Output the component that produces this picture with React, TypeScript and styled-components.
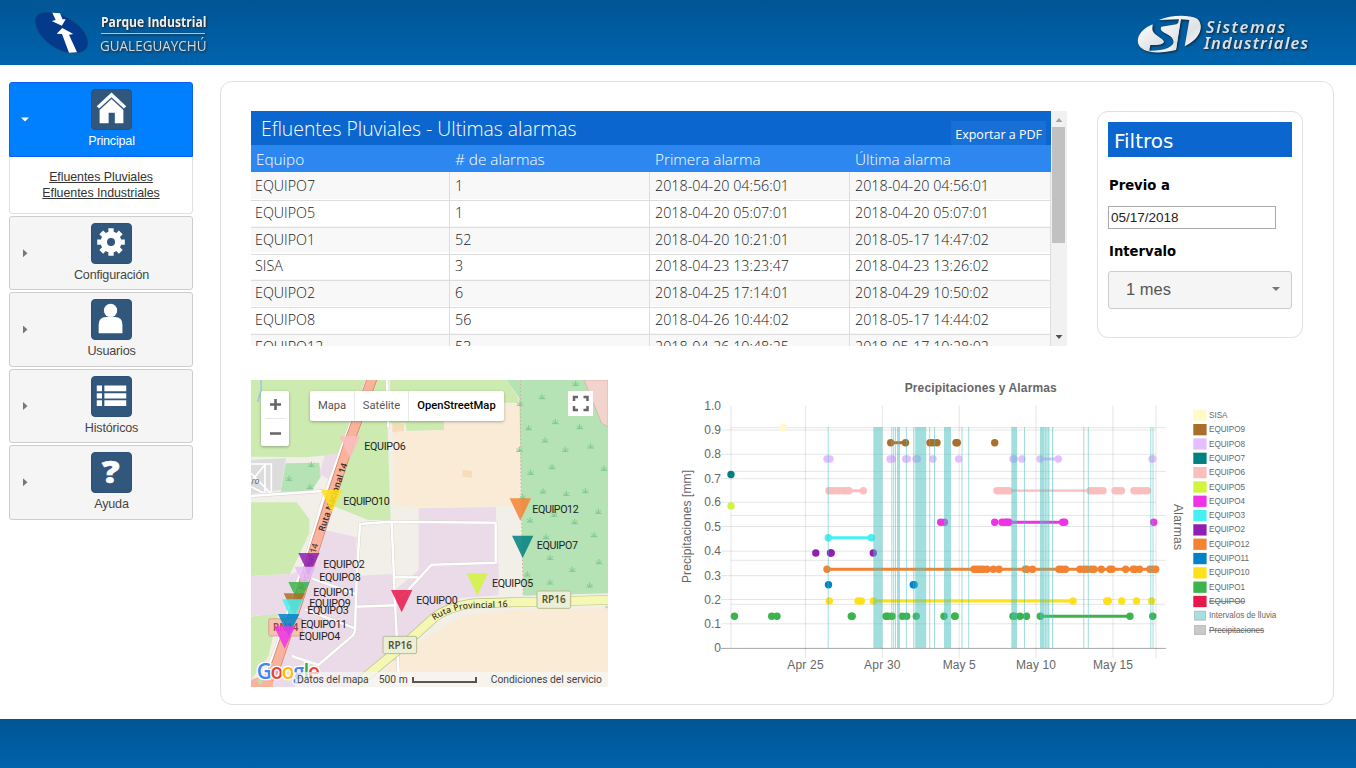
import React from 'react';
import styled, { createGlobalStyle } from 'styled-components';

const Global = createGlobalStyle`
  * { box-sizing: border-box; }
  body { margin: 0; background: #fff; font-family: "Liberation Sans", Arial, sans-serif; }
`;

const sans = '"Liberation Sans", Arial, sans-serif';
const open = '"Open Sans", "Noto Sans", sans-serif';

const Page = styled.div`
  display: flex;
  flex-direction: column;
  width: 1356px;
  height: 768px;
  overflow: hidden;
`;
const Header = styled.header`
  display: flex;
  justify-content: space-between;
  flex: 0 0 65px;
  background: linear-gradient(#005595, #0064ad);
`;
const Footer = styled.footer`
  flex: 0 0 49px;
  background: linear-gradient(#005595, #0063ab);
`;
const Body = styled.div`
  display: flex;
  flex: 1;
  align-items: flex-start;
  padding: 16px 22px 14px 9px;
`;
const Sidebar = styled.nav`
  display: flex;
  flex-direction: column;
  gap: 2px;
  width: 184px;
  margin: 1px 27px 0 0;
`;
const MenuItem = styled.div<{ $active?: boolean }>`
  display: flex;
  align-items: center;
  height: ${p => (p.$active ? 75 : 74.4)}px;
  padding: 0 0 0 11px;
  border: 1px solid ${p => (p.$active ? '#0a5ff0' : '#cdcdcd')};
  border-radius: ${p => (p.$active ? '3px 3px 0 0' : '3px')};
  background: ${p => (p.$active ? '#007fff' : '#f5f5f5')};
  color: ${p => (p.$active ? '#fff' : '#454545')};
  font-size: 12.6px;
  letter-spacing: -0.2px;
`;
const Caret = styled.span<{ $open?: boolean }>`
  width: 8px;
  height: 8px;
  margin-left: ${p => (p.$open ? 0 : 2)}px;
  margin-right: ${p => (p.$open ? 0 : -2)}px;
  background: ${p => (p.$open ? '#fff' : '#777')};
  clip-path: ${p => (p.$open ? 'polygon(0 25%, 100% 25%, 50% 75%)' : 'polygon(0 0, 56% 50%, 0 100%)')};
`;
const MenuLabel = styled.div`
  display: flex;
  flex-direction: column;
  align-items: center;
  gap: 3px;
  flex: 1;
  line-height: 16px;
  padding: 0 0 0 2px;
  margin-top: -0.6px;
`;
const Tile = styled.svg`
  width: 41px;
  height: 41px;
  border-radius: 4px;
  background: #31577d;
  border: 1px solid #2c5078;
`;
const SubMenu = styled.div`
  display: flex;
  flex-direction: column;
  align-items: center;
  height: 57px;
  margin-top: -2px;
  padding-top: 12px;
  border: 1px solid #e0e0e0;
  border-top: 0;
  border-radius: 0 0 4px 4px;
  color: #333;
  font-size: 12.4px;
  letter-spacing: -0.05px;
  line-height: 16px;
  text-decoration: underline;
`;
const Panel = styled.main`
  display: flex;
  flex-direction: column;
  gap: 35px;
  width: 1114px;
  height: 624px;
  padding: 29px 30px 0 30px;
  border: 1px solid #e0e0e0;
  border-radius: 12px;
`;
const TopRow = styled.section`
  display: flex;
  justify-content: space-between;
  align-items: flex-start;
  height: 234px;
`;
const BottomRow = styled.section`
  display: flex;
  align-items: flex-start;
  gap: 62px;
`;
const TableBox = styled.div`
  display: flex;
  width: 816px;
  height: 235px;
  overflow: hidden;
  font-family: ${open};
  font-weight: 300;
`;
const TableMain = styled.div`
  width: 800px;
`;
const TableTitle = styled.div`
  display: flex;
  justify-content: space-between;
  align-items: flex-end;
  height: 34px;
  padding: 0 5px 0 10px;
  background: #0b66d0;
  color: #fff;
  font-size: 19.35px;
  line-height: 32px;
`;
const ExportButton = styled.span`
  height: 24px;
  padding: 0 4px;
  background: #1870d6;
  font-size: 12.5px;
  font-weight: 400;
  line-height: 27px;
`;
const Columns = styled.div<{ $alt?: boolean }>`
  display: grid;
  grid-template-columns: 199px 200px 200px 201px;
  height: 26.75px;
  background: ${p => (p.$alt ? '#f8f8f8' : '#fff')};
  color: #222;
  font-size: 14.3px;
  line-height: 28px;
`;
const HeadColumns = styled(Columns)`
  height: 27px;
  background: #2c87f0;
  color: #fff;
  font-size: 15.3px;
`;
const HeadCell = styled.span`
  padding-left: 5px;
`;
const Cell = styled.span`
  padding-left: 5px;
  border-right: 1px solid #ddd;
  border-bottom: 1px solid #ddd;
  &:first-child { padding-left: 4px; }
`;
const ScrollBar = styled.div`
  display: flex;
  flex-direction: column;
  justify-content: space-between;
  align-items: center;
  width: 16px;
  background: #f1f1f1;
`;
const ScrollThumb = styled.div`
  width: 13px;
  height: 116px;
  margin: 0 1px auto 0;
  background: #c1c1c1;
`;
const ScrollArrow = styled.span<{ $down?: boolean }>`
  width: 7px;
  height: 4px;
  margin: ${p => (p.$down ? '0 0 7px' : '7px 0 5px')};
  background: ${p => (p.$down ? '#505050' : '#a3a3a3')};
  clip-path: ${p => (p.$down ? 'polygon(0 0, 100% 0, 50% 100%)' : 'polygon(0 100%, 100% 100%, 50% 0)')};
`;
const Filters = styled.aside`
  display: flex;
  flex-direction: column;
  width: 206px;
  height: 227px;
  padding: 10px;
  border: 1px solid #e0e0e0;
  border-radius: 11px;
  font-family: "DejaVu Sans", Verdana, sans-serif;
`;
const FilterTitle = styled.div`
  height: 35px;
  padding-left: 6px;
  background: #0b66d0;
  color: #fff;
  font-size: 20px;
  line-height: 38px;
`;
const FilterLabel = styled.label`
  margin-top: 20px;
  font-size: 13.2px;
  font-weight: bold;
  line-height: 17px;
  padding-left: 1px;
`;
const DateBox = styled.div`
  width: 168px;
  height: 23px;
  margin-top: 12px;
  margin-bottom: -6px;
  padding-left: 2px;
  border: 1px solid #a9a9a9;
  color: #222;
  font: 13.5px/21px ${sans};
`;
const SelectBox = styled.div`
  display: flex;
  justify-content: space-between;
  align-items: center;
  height: 38px;
  margin-top: 11px;
  padding: 0 11px 2px 17px;
  border: 1px solid #ccc;
  border-radius: 3px;
  background: #f5f5f5;
  color: #555;
  font: 16.5px ${sans};
  & > span { background: #777; }
`;
const MapBox = styled.div`
  position: relative;
  flex: none;
  width: 357px;
  height: 307px;
  overflow: hidden;
  font-family: Roboto, sans-serif;
`;
const MapSvg = styled.svg`
  display: block;
  width: 357px;
  height: 307px;
`;
const MapTypes = styled.div`
  position: absolute;
  left: 59px;
  top: 11px;
  display: flex;
  height: 30px;
  border-radius: 2px;
  background: #fff;
  box-shadow: 0 1px 3px rgba(0, 0, 0, 0.3);
`;
const MapType = styled.span<{ $w: number; $on?: boolean }>`
  width: ${p => p.$w}px;
  border-left: ${p => (p.$w === 44 ? 0 : 1)}px solid #e8e8e8;
  color: ${p => (p.$on ? '#000' : '#565656')};
  font-size: 11.2px;
  font-weight: ${p => (p.$on ? 500 : 400)};
  line-height: 30px;
  text-align: center;
`;
const ZoomBox = styled.div`
  position: absolute;
  left: 10px;
  top: 11px;
  width: 28px;
  height: 55px;
  border-radius: 2px;
  background: #fff;
  box-shadow: 0 1px 3px rgba(0, 0, 0, 0.3);
`;
const FullScreen = styled.div`
  position: absolute;
  left: 317px;
  top: 11px;
  width: 25px;
  height: 25px;
  background: #fff;
`;
const Credits = styled.div`
  position: absolute;
  right: 0;
  bottom: 0;
  display: flex;
  align-items: center;
  height: 15px;
  width: 313px;
  padding: 0 6px 0 2px;
  background: rgba(245, 245, 245, 0.72);
  color: #444;
  font-size: 10.3px;
  white-space: nowrap;
`;
const ScaleText = styled.span`
  margin-left: auto;
`;
const Scale = styled.span`
  flex: none;
  width: 65px;
  height: 6px;
  margin: 0 14px 0 4px;
  border: 2px solid #555;
  border-top: 0;
`;
const ChartSvg = styled.svg`
  flex: none;
  width: 640px;
  height: 310px;
  margin-top: -5px;
  overflow: visible;
  font-family: ${sans};
`;
const BrandSvg = styled.svg<{ $w: number }>`
  width: ${p => p.$w}px;
  height: 65px;
`;

const ParkLogo = () => (
  <BrandSvg $w={240} viewBox="0 0 240 65">
    <path d="M35.5 21C35.5 14.500 40 12.500 48 12.500C63 12.500 87.500 27 87.700 43C87.700 50 82 53 73 53C55 52 36 36 35.500 21Z" fill="#033a8c" stroke="#1b4166" strokeWidth=".6" />
    <path d="M52.300 12.700L60 13.300L62.500 19.300H65.700L61.800 25.700L51.700 21L55.700 20Z" fill="#fff" />
    <path d="M62.300 28L73.300 34L69 34.700L77 52.300L69 52.700L62 34L56.700 33.700Z" fill="#fff" />
    <g fontFamily={open} style={{ filter: 'drop-shadow(1px 1px 1px #222)' }}>
      <text x="101" y="27" fontSize="13.500" fontWeight="700" textLength="105.500" lengthAdjust="spacingAndGlyphs" fill="#f0f0f0">Parque Industrial</text>
      <path d="M101 33.500H205" stroke="#b9c4d0" />
      <text x="100" y="51" fontSize="14.800" fontWeight="500" textLength="106.500" lengthAdjust="spacingAndGlyphs" fill="#d4d8dc">GUALEGUAYCHÚ</text>
    </g>
  </BrandSvg>
);

const SistemasLogo = () => (
  <BrandSvg $w={256} viewBox="0 0 256 65">
    <defs>
      <linearGradient id="silver" x1="0" y1="0" x2="1" y2="1">
        <stop offset="0" stopColor="#fff" />
        <stop offset=".6" stopColor="#dfe2e5" />
        <stop offset="1" stopColor="#fff" />
      </linearGradient>
    </defs>
    <g style={{ filter: 'drop-shadow(1px 1px 1px #123)' }}>
      <g transform="scale(.3333)" fill="url(#silver)">
        <path d="M158 73C130 84 110 106 114 128C120 156 168 166 228 149L240 70L232 70L226 84L183 86C184 100 219 104 222 122C222 140 196 152 148 152L151 135C170 136 190 134 192 125C190 114 158 106 157 88Z" />
        <path d="M176 60C210 46 262 42 292 56C314 76 302 118 254 139L268 60L243 58L228 150L208 152C226 140 226 116 206 104C190 96 178 92 184 80L234 72L237 58Z" />
      </g>
      <g fontFamily='"Noto Sans", sans-serif' fontStyle="italic" fontWeight="600" fill="#dde0e3">
        <text x="106" y="32.500" fontSize="16.500" textLength="79">Sistemas</text>
        <text x="104" y="49" fontSize="16.500" textLength="104">Industriales</text>
      </g>
    </g>
  </BrandSvg>
);

const HomeIcon = () => (
  <Tile viewBox="0 0 41 41">
    <path d="M20.500 2.500L36 17L33.500 19.500L20.500 7.500L7.500 19.500L5 17Z" fill="#fff" />
    <path d="M20.500 9.500L33 21V35H24V24H17.500V35H8V21Z" fill="#fff" />
  </Tile>
);
const GearIcon = () => (
  <Tile viewBox="0 0 41 41">
    <g fill="#fff">
      <circle cx="20" cy="19" r="11" />
      {[0, 45, 90, 135, 180, 225, 270, 315].map(a => (
        <path key={a} d="M17.200 4.500H22.800V11H17.200Z" transform={`rotate(${a} 20 19)`} />
      ))}
    </g>
    <circle cx="20" cy="19" r="4.200" fill="#31577d" />
  </Tile>
);
const UserIcon = () => (
  <Tile viewBox="0 0 41 41">
    <circle cx="19.500" cy="11" r="7" fill="#fff" />
    <path d="M7 35V26Q7 18 15 18H24Q32 18 32 26V35Z" fill="#fff" />
  </Tile>
);
const ListIcon = () => (
  <Tile viewBox="0 0 41 41">
    <path d="M5 9H10.500V15H5ZM13 9H36V15H13ZM5 17H10.500V22.500H5ZM13 17H36V22.500H13ZM5 24.500H10.500V30.500H5ZM13 24.500H36V30.500H13Z" fill="#fff" />
  </Tile>
);
const HelpIcon = () => (
  <Tile viewBox="0 0 41 41">
    <text x="16.700" y="32" transform="scale(1.18 1)" fontFamily={open} fontSize="31" fontWeight="800" textAnchor="middle" fill="#fff" stroke="#fff" strokeWidth=".6">?</text>
  </Tile>
);

const menu = [
  { label: 'Configuración', Icon: GearIcon },
  { label: 'Usuarios', Icon: UserIcon },
  { label: 'Históricos', Icon: ListIcon },
  { label: 'Ayuda', Icon: HelpIcon },
];

const alarms = [
  ['EQUIPO7', '1', '2018-04-20 04:56:01', '2018-04-20 04:56:01'],
  ['EQUIPO5', '1', '2018-04-20 05:07:01', '2018-04-20 05:07:01'],
  ['EQUIPO1', '52', '2018-04-20 10:21:01', '2018-05-17 14:47:02'],
  ['SISA', '3', '2018-04-23 13:23:47', '2018-04-23 13:26:02'],
  ['EQUIPO2', '6', '2018-04-25 17:14:01', '2018-04-29 10:50:02'],
  ['EQUIPO8', '56', '2018-04-26 10:44:02', '2018-05-17 14:44:02'],
  ['EQUIPO12', '53', '2018-04-26 10:48:25', '2018-05-17 10:28:02'],
];

/* Map markers: name, colour, left and top of the triangle, label x and baseline (map units, 3 per pixel) */
type Marker = [string, string, number, number, number, number];
const markers: Marker[] = [
  ['EQUIPO6', '#fabebe', 298, 198, 374, 241],
  ['EQUIPO10', '#ffe119', 243, 360, 311, 404],
  ['EQUIPO12', '#f58231', 809, 385, 878, 429],
  ['EQUIPO7', '#008080', 816, 497, 891, 537],
  ['EQUIPO2', '#911eb4', 175, 549, 251, 593],
  ['EQUIPO8', '#e6beff', 164, 590, 239, 633],
  ['EQUIPO1', '#3cb44b', 145, 636, 221, 678],
  ['EQUIPO9', '#aa6e28', 131, 670, 209, 711],
  ['EQUIPO3', '#46f0f0', 126, 688, 203, 731],
  ['EQUIPO11', '#0082c8', 114, 732, 183, 774],
  ['EQUIPO4', '#f032e6', 102, 769, 178, 810],
  ['EQUIPO0', '#e6194b', 453, 660, 530, 701],
  ['EQUIPO5', '#d2f53c', 680, 610, 757, 651],
];
const shrubs = [
  [1007, 40], [906, 80], [840, 100], [946, 155], [866, 173], [1019, 170], [915, 210], [976, 238], [1052, 228],
  [838, 238], [936, 290], [872, 307], [1092, 295], [909, 363], [979, 370], [1036, 362], [848, 380], [1075, 424],
  [942, 433], [870, 450], [1004, 455], [918, 500], [1062, 494], [930, 562], [1077, 575], [997, 598], [862, 612],
  [930, 636], [1049, 645], [147, 325], [210, 350], [214, 283],
];
const minorRoads = [
  'M455 455L465 700L478 952', 'M383 24L304 235L250 385L208 530L170 640L110 830L60 952',
  'M350 620L345 780Q344 790 338 797L235 885L155 858', 'M350 620L360 462L450 455L767 458V578L575 584L500 665L480 680',
  'M465 622H535', 'M345 710L470 706', 'M215 625L345 672', 'M195 718L345 775', 'M441 30L445 172', 'M33 378L250 363',
];

const MapView = () => (
  <MapBox>
    <MapSvg viewBox="33 30 1071 921">
      <rect x="33" y="30" width="1071" height="921" fill="#f2efe9" />
      <g fill="#cdebb0">
        <path d="M33 30H375L300 252L200 262L33 260Z" />
        <path d="M405 30H438L452 450L385 450L272 405L330 250Z" />
        <path d="M450 30H800L835 85L835 98H640L612 120V180L500 183L497 160L450 158Z" />
        <path d="M33 397L170 397L208 447L208 490L150 612L33 618Z" />
        <path d="M33 740L115 730L85 860L33 930Z" />
      </g>
      <g fill="#b5e3b5">
        <path d="M800 30L838 85L840 200L850 677L1104 670V30Z" />
        <path d="M137 280L238 278L242 320L215 363L122 365Z" />
        <path d="M1095 708H1104V750Z" />
      </g>
      <path d="M1032 30H1104V170L1085 160Z" fill="#f3d3ce" stroke="#dba7a0" strokeWidth="2" />
      <g fill="#ebdbe8">
        <path d="M255 255L300 250L285 325L265 327L238 310Z" />
        <path d="M255 480L350 502L345 618L455 612L480 875L420 870L340 952H90L130 840L160 730L33 738V618L155 612L180 600Z" />
        <path d="M536 415L768 411V458H770V580H776V676L660 684L505 800L470 830L465 660L536 600Z" />
      </g>
      <g fill="#faebd7">
        <path d="M457 187L612 180V140L640 99L837 99L840 408L540 412L462 407Z" />
        <path d="M1104 715L850 717L670 735L560 800L470 870L380 951H1104Z" />
      </g>
      <path d="M667 300L696 302V323L667 320ZM457 158L493 162L491 184L457 186Z" fill="#f5dcba" />
      <path d="M33 270L138 265L122 360L33 372Z" fill="#dcdcdc" />
      <g fill="none" stroke="#fff" strokeWidth="5">
        <path d="M33 282H94V372M75 284V368M33 335L75 284M33 310L94 372M33 350L72 370" />
      </g>
      <g fill="none" stroke="#d4cfc9" strokeWidth="10" strokeLinejoin="round">
        {minorRoads.map(d => <path key={d} d={d} />)}
      </g>
      <g fill="none" stroke="#fff" strokeWidth="7.500" strokeLinejoin="round">
        {minorRoads.map(d => <path key={d} d={d} />)}
      </g>
      <path d="M63 30L64 60L53 95" fill="none" stroke="#9ccbe8" strokeWidth="5" />
      <path d="M841 30L843 400L850 677" fill="none" stroke="#dba397" strokeWidth="3" strokeDasharray="4 7" />
      <g fill="none" strokeLinejoin="round">
        <path d="M1104 690L850 696L700 700Q620 712 580 745L480 835L340 951" stroke="#bcc07e" strokeWidth="29" />
        <path d="M1104 690L850 696L700 700Q620 712 580 745L480 835L340 951" stroke="#f4f8b4" strokeWidth="25" />
        <path d="M397 24L330 210L232 510L175 690L110 880L65 965" stroke="#cf7a62" strokeWidth="31" />
        <path d="M397 24L330 210L232 510L175 690L110 880L65 965" stroke="#f9b29c" strokeWidth="27" />
      </g>
      <path d="M33 930L95 905L100 951H33Z" fill="#f9b29c" />
      <path d="M55 925L70 932L65 945L52 940Z" fill="#bfe0a0" />
      <g fill="none" stroke="#7fc894" strokeWidth="3">
        {shrubs.map(([x, y]) => (
          <path key={`${x}-${y}`} d={`M${x - 10} ${y + 6}H${x + 10}M${x} ${y + 6}V${y - 8}M${x} ${y + 6}L${x - 8} ${y - 3}M${x} ${y + 6}L${x + 8} ${y - 3}`} />
        ))}
      </g>
      <g fontFamily='"Noto Sans", sans-serif' fontSize="26" fontWeight="600" fill="#3c2c28">
        <text transform="translate(252 486) rotate(-71)" textLength="215">Ruta Nacional 14</text>
        <text transform="translate(193 662) rotate(-73)" textLength="145" opacity=".8">Nacional 14</text>
        <path id="rp" d="M583 752Q640 712 720 714L820 710" fill="none" />
        <text fontWeight="500"><textPath href="#rp" textLength="228">Ruta Provincial 16</textPath></text>
      </g>
      <text x="34" y="341" fontFamily='"Noto Sans", sans-serif' fontStyle="italic" fontSize="26" fill="#666">ro</text>
      <g fontFamily='"Noto Sans", sans-serif' fontSize="30" fontWeight="600" textAnchor="middle">
        <rect x="86" y="746" width="101" height="52" rx="5" fill="#f3c3b2" stroke="#d8907c" strokeWidth="2" />
        <text x="137" y="783" textLength="76" lengthAdjust="spacingAndGlyphs" fill="#9a4638">RN14</text>
        <rect x="429" y="799" width="101" height="52" rx="5" fill="#ecefd8" stroke="#b7bb8e" strokeWidth="3" />
        <text x="480" y="836" textLength="72" lengthAdjust="spacingAndGlyphs" fill="#54552f">RP16</text>
        <rect x="891" y="663" width="101" height="52" rx="5" fill="#ecefd8" stroke="#b7bb8e" strokeWidth="3" />
        <text x="941" y="700" textLength="72" lengthAdjust="spacingAndGlyphs" fill="#54552f">RP16</text>
      </g>
      {markers.map(([name, color, x, y]) => (
        <path key={name} d={`M${x} ${y}h64l-32 67z`} fill={color} opacity=".85" />
      ))}
      <g fontFamily="Roboto, sans-serif" fontSize="32" fill="#222">
        {markers.map(([name, , , , x, y]) => (
          <text key={name} x={x - 1} y={y} textLength={name.length === 8 ? 139 : 124}>{name}</text>
        ))}
      </g>
      <g fontFamily='"Open Sans", sans-serif' fontSize="62" fontWeight="600" stroke="#fff" strokeWidth="8" paintOrder="stroke">
        <text x="50" y="926" textLength="190">
          <tspan fill="#4285f4">G</tspan><tspan fill="#ea4335">o</tspan><tspan fill="#fbbc05">o</tspan><tspan fill="#4285f4">g</tspan><tspan fill="#34a853">l</tspan><tspan fill="#ea4335">e</tspan>
        </text>
      </g>
    </MapSvg>
    <ZoomBox>
      <svg width="28" height="55" viewBox="0 0 28 55">
        <path d="M9 13.500H20M14.500 8V19M9 42.500H20" stroke="#666" strokeWidth="2.600" />
        <path d="M4.500 27.500H24" stroke="#e6e6e6" />
      </svg>
    </ZoomBox>
    <MapTypes>
      <MapType $w={44}>Mapa</MapType>
      <MapType $w={54}>Satélite</MapType>
      <MapType $w={96} $on>OpenStreetMap</MapType>
    </MapTypes>
    <FullScreen>
      <svg width="25" height="25" viewBox="0 0 25 25">
        <path d="M6 10V6H10M15.500 6H19.500V10M19.500 15V19H15.500M10 19H6V15" fill="none" stroke="#666" strokeWidth="2.500" />
      </svg>
    </FullScreen>
    <Credits>
      <span>Datos del mapa</span>
      <ScaleText>500 m</ScaleText>
      <Scale />
      <span>Condiciones del servicio</span>
    </Credits>
  </MapBox>
);

/* Alarm series: name, colour, row y, line spans, dot positions */
interface Series { name: string; color: string; y: number; lines: number[][]; dots: number[] }
const series: Series[] = [
  { name: 'SISA', color: '#fffac8', y: 427.5, lines: [], dots: [782.7] },
  { name: 'EQUIPO9', color: '#aa6e28', y: 442.7, lines: [[890.7, 905.7]], dots: [890.7, 905.5, 930, 933, 937, 956, 957.3, 994.7] },
  { name: 'EQUIPO8', color: '#e6beff', y: 459, lines: [[1040, 1058]], dots: [827, 830, 890, 892.3, 905.7, 907.3, 916, 917.3, 933, 958.7, 1013, 1014.5, 1022, 1040, 1058.3, 1152, 1152.8] },
  { name: 'EQUIPO7', color: '#008080', y: 474.5, lines: [], dots: [731] },
  { name: 'EQUIPO6', color: '#fabebe', y: 490.7, lines: [[828, 863], [997, 1104]], dots: [829, 832, 835, 839, 843, 846, 849, 863.3, 997, 1000, 1003, 1006, 1009, 1090, 1093, 1096, 1100, 1103, 1115, 1118, 1121.5, 1134, 1137, 1140, 1144, 1147.5] },
  { name: 'EQUIPO5', color: '#d2f53c', y: 506, lines: [], dots: [731] },
  { name: 'EQUIPO4', color: '#f032e6', y: 522.3, lines: [[1009, 1064]], dots: [940.7, 944.5, 994.7, 1002, 1005, 1007, 1009, 1062.7, 1064.7, 1153.7] },
  { name: 'EQUIPO3', color: '#46f0f0', y: 537.7, lines: [[828, 871]], dots: [828.3, 871.2] },
  { name: 'EQUIPO2', color: '#911eb4', y: 553, lines: [], dots: [815.8, 830.5, 831.2, 873.3] },
  { name: 'EQUIPO12', color: '#f58231', y: 569.3, lines: [[827, 1156]], dots: [827, 974, 977, 980, 983, 987, 993.3, 999, 1025.3, 1027, 1032.5, 1059, 1062, 1065.5, 1080, 1084, 1087, 1091, 1094, 1101.3, 1110, 1112, 1125.7, 1133.3, 1135, 1139.5, 1150, 1153, 1155.7] },
  { name: 'EQUIPO11', color: '#0082c8', y: 584.7, lines: [], dots: [828.5, 913.3, 914.2] },
  { name: 'EQUIPO10', color: '#ffe119', y: 601, lines: [[873, 1073]], dots: [829.3, 858, 861.3, 873.3, 1073, 1106.7, 1108.3, 1121.7, 1136.5, 1151.5] },
  { name: 'EQUIPO1', color: '#3cb44b', y: 616.3, lines: [[1040, 1130]], dots: [734.4, 771.7, 777, 851.3, 852.2, 886, 888, 892, 902.3, 906.7, 916.3, 944, 954.6, 955.3, 1013, 1014.5, 1020, 1026.5, 1040.3, 1130, 1152.7] },
];
/* Rain intervals: left edge and width */
const rain = [
  [827.7, 1], [873.3, 9.2], [891.3, 1], [893.2, 1], [895, 1], [897, 3], [905.9, 1], [913.2, 1], [914.8, 1], [916, 10.2],
  [929.2, 1], [934, 1], [944, 7], [961.5, 1], [968.2, 1], [1011.3, 5.7], [1024, 1], [1040, 4], [1044.3, 1.9], [1046.4, 1],
  [1047.6, 1.8], [1052, 1.2], [1083.3, 1], [1087.8, 1], [1150.3, 1], [1152.5, 1],
];
const ticksY: [number, string][] = [
  [405.5, '1.0'], [430, '0.9'], [454.3, '0.8'], [478.7, '0.7'], [502.3, '0.6'], [526.5, '0.5'],
  [551.2, '0.4'], [575.7, '0.3'], [599.5, '0.2'], [623.8, '0.1'], [648.3, '0'],
];
const ticksX: [number, string][] = [[805.4, 'Apr 25'], [882.3, 'Apr 30'], [959.2, 'May 5'], [1036, 'May 10'], [1113, 'May 15']];
const legend = [
  ...series.map(s => ({ name: s.name, color: s.color, off: false })),
  { name: 'EQUIPO0', color: '#e6194b', off: true },
  { name: 'Intervalos de lluvia', color: '#a5dfdf', off: false },
  { name: 'Precipitaciones', color: '#c9c9c9', off: true },
];

const Chart = () => (
  <ChartSvg viewBox="670 375 640 310">
    <text x="980.700" y="392" fontSize="12" fontWeight="bold" textAnchor="middle" textLength="152" fill="#666">Precipitaciones y Alarmas</text>
    <g stroke="#000" strokeOpacity=".1">
      {ticksY.slice(1, 10).map(([y]) => <path key={y} d={`M721 ${y}H1156`} />)}
      {[427.7, 471.4, 515.4, 560.3, 604.3].map(y => <path key={y} d={`M731 ${y}H1166`} />)}
      {ticksX.map(([x]) => <path key={x} d={`M${x} 405.500V658`} />)}
      <path d="M731 405.500V648M1156 405.500V658" />
      <path d="M721 648.400H1166" strokeOpacity=".35" />
    </g>
    {series.map(s => (
      <g key={s.name} fill={s.color} stroke={s.color}>
        {s.lines.map(([a, b]) => <path key={a} d={`M${a} ${s.y}H${b}`} strokeWidth={s.name === 'EQUIPO6' && a > 900 ? 2.3 : 3} />)}
        {s.dots.map((x, i) => <circle key={i} cx={x} cy={s.y} r="3.700" stroke="none" />)}
      </g>
    ))}
    {rain.map(([x, w]) => <rect key={x} x={x} y="427" width={w} height="221" fill="rgb(75,192,192)" fillOpacity=".52" />)}
    <g fontSize="12" fill="#666">
      {ticksY.map(([y, t]) => <text key={t} x="721" y={y + 4} textAnchor="end">{t}</text>)}
      {ticksX.map(([x, t]) => <text key={t} x={x} y="669" textAnchor="middle" textLength={t.length === 5 ? 33 : t[0] === 'A' ? 36.5 : 40}>{t}</text>)}
      <text transform="translate(691 526.500) rotate(-90)" textAnchor="middle" textLength="113">Precipitaciones [mm]</text>
      <text transform="translate(1174 527) rotate(90)" textAnchor="middle" textLength="46">Alarmas</text>
    </g>
    {legend.map((l, i) => {
      const y = 415.2 + i * 14.32;
      return (
        <g key={l.name}>
          <rect x={i > 13 ? 1194.5 : 1193.3} y={y - (i > 13 ? 4.5 : 5.5)} width={i > 13 ? 11 : 13.3} height={i > 13 ? 9 : 11.3} fill={l.color} stroke={i > 13 ? '#999' : 'none'} strokeOpacity=".5" />
          <text x="1209" y={y + 2.7} fontSize="8.150" fill="#666" textDecoration={l.off ? 'line-through' : 'none'}>{l.name}</text>
        </g>
      );
    })}
  </ChartSvg>
);

export default function App() {
  return (
    <Page>
      <Global />
      <Header>
        <ParkLogo />
        <SistemasLogo />
      </Header>
      <Body>
        <Sidebar>
          <MenuItem $active>
            <Caret $open />
            <MenuLabel><HomeIcon />Principal</MenuLabel>
          </MenuItem>
          <SubMenu>
            <span>Efluentes Pluviales</span>
            <span>Efluentes Industriales</span>
          </SubMenu>
          {menu.map(({ label, Icon }) => (
            <MenuItem key={label}>
              <Caret />
              <MenuLabel><Icon />{label}</MenuLabel>
            </MenuItem>
          ))}
        </Sidebar>
        <Panel>
          <TopRow>
            <TableBox>
              <TableMain>
                <TableTitle>
                  Efluentes Pluviales - Ultimas alarmas
                  <ExportButton>Exportar a PDF</ExportButton>
                </TableTitle>
                <HeadColumns>
                  {['Equipo', '# de alarmas', 'Primera alarma', 'Última alarma'].map(h => <HeadCell key={h}>{h}</HeadCell>)}
                </HeadColumns>
                {alarms.map((row, i) => (
                  <Columns key={row[0]} $alt={i % 2 === 0}>
                    {row.map((c, j) => <Cell key={j}>{c}</Cell>)}
                  </Columns>
                ))}
              </TableMain>
              <ScrollBar>
                <ScrollArrow />
                <ScrollThumb />
                <ScrollArrow $down />
              </ScrollBar>
            </TableBox>
            <Filters>
              <FilterTitle>Filtros</FilterTitle>
              <FilterLabel>Previo a</FilterLabel>
              <DateBox>05/17/2018</DateBox>
              <FilterLabel>Intervalo</FilterLabel>
              <SelectBox>1 mes<Caret $open /></SelectBox>
            </Filters>
          </TopRow>
          <BottomRow>
            <MapView />
            <Chart />
          </BottomRow>
        </Panel>
      </Body>
      <Footer />
    </Page>
  );
}
